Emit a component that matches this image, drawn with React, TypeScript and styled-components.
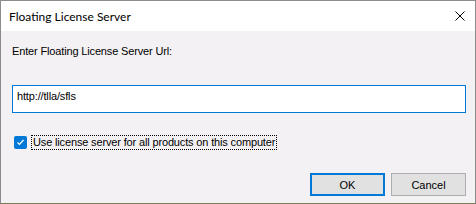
import styled, { createGlobalStyle } from 'styled-components';

const GlobalStyle = createGlobalStyle`
    html, body {
        margin: 0;
        padding: 0;
        background: #6b6b4e;
    }
`;

const Window = styled.div`
    width: 476px;
    height: 204px;
    box-sizing: border-box;
    border: 1px solid #8c8c8c;
    border-bottom-color: #7a7a5a;
    background: #f4f1f4;
    display: flex;
    flex-direction: column;
    font-family: 'Liberation Sans', Arial, sans-serif;
    font-size: 11px;
    letter-spacing: -0.15px;
    color: #000;
`;

const TitleBar = styled.div`
    height: 30px;
    background: #fff;
    display: flex;
    align-items: center;
    justify-content: space-between;
    padding-left: 8px;
    flex-shrink: 0;
`;

const Title = styled.span`
    font-family: Lato, 'Open Sans', sans-serif;
    font-size: 12px;
    letter-spacing: 0;
    color: #000;
`;

const CloseButton = styled.div`
    width: 30px;
    height: 30px;
    display: flex;
    align-items: center;
    justify-content: center;
`;

const Body = styled.div`
    flex: 1;
    display: flex;
    flex-direction: column;
    padding: 14px 9px 0 11px;
`;

const Label = styled.div`
    line-height: 13px;
    height: 13px;
`;

const UrlInput = styled.div`
    margin-top: 27px;
    height: 28px;
    box-sizing: border-box;
    border: 1px solid #0078d7;
    background: #fff;
    padding: 4px 4px;
    line-height: 13px;
`;

const CheckRow = styled.label`
    margin-top: 23px;
    display: flex;
    align-items: center;
    gap: 5px;
    padding-left: 2px;
    height: 13px;
`;

const Box = styled.span`
    width: 13px;
    height: 13px;
    border-radius: 2px;
    background: #0078d7;
    display: flex;
    align-items: center;
    justify-content: center;
`;

const CheckText = styled.span`
    outline: 1px dotted #000;
    padding: 0 1px;
    line-height: 13px;
`;

const Buttons = styled.div`
    margin-top: 24px;
    display: flex;
    justify-content: flex-end;
    gap: 6px;
`;

const Button = styled.button<{ $default?: boolean }>`
    width: 75px;
    height: 23px;
    box-sizing: border-box;
    font-family: inherit;
    font-size: 11px;
    color: #000;
    background: #e1e1e1;
    border: ${p => (p.$default ? '2px solid #0078d7' : '1px solid #adadad')};
    padding: 0;
`;

export default function App() {
    return (
        <>
            <GlobalStyle />
            <Window>
                <TitleBar>
                    <Title>Floating License Server</Title>
                    <CloseButton>
                        <svg width="10" height="10" viewBox="0 0 10 10">
                            <path d="M0.5 0.5 L9.5 9.5 M9.5 0.5 L0.5 9.5" stroke="#000" strokeWidth="1" />
                        </svg>
                    </CloseButton>
                </TitleBar>
                <Body>
                    <Label>Enter Floating License Server Url:</Label>
                    <UrlInput>http://tlla/sfls</UrlInput>
                    <CheckRow>
                        <Box>
                            <svg width="9" height="9" viewBox="0 0 9 9">
                                <path d="M1.5 4.5 L3.5 6.5 L7.5 2" stroke="#fff" strokeWidth="1.2" fill="none" />
                            </svg>
                        </Box>
                        <CheckText>Use license server for all products on this computer</CheckText>
                    </CheckRow>
                    <Buttons>
                        <Button $default>OK</Button>
                        <Button>Cancel</Button>
                    </Buttons>
                </Body>
            </Window>
        </>
    );
}
